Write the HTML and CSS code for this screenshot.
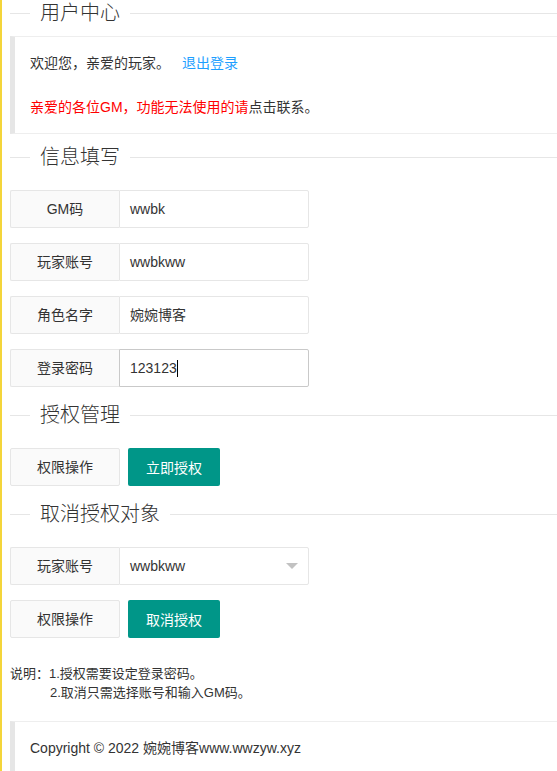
FILE: index.html
```html
<!DOCTYPE html>
<html lang="zh-CN">
<head>
<meta charset="utf-8">
<title>用户中心</title>
<link rel="stylesheet" href="styles.css">
</head>
<body>
<div class="page">
  <div class="legend legend-first"><span class="legend-text">用户中心</span></div>
  <div class="quote">
    欢迎您，亲爱的玩家。<a class="link" href="#">退出登录</a><br><br><span class="red">亲爱的各位GM，功能无法使用的请</span>点击联系。
  </div>

  <div class="legend"><span class="legend-text">信息填写</span></div>
  <div class="form-item">
    <div class="label">GM码</div>
    <div class="input">wwbk</div>
  </div>
  <div class="form-item">
    <div class="label">玩家账号</div>
    <div class="input">wwbkww</div>
  </div>
  <div class="form-item">
    <div class="label">角色名字</div>
    <div class="input">婉婉博客</div>
  </div>
  <div class="form-item">
    <div class="label">登录密码</div>
    <div class="input input-focus">123123<span class="caret"></span></div>
  </div>

  <div class="legend"><span class="legend-text">授权管理</span></div>
  <div class="form-item">
    <div class="label label-full">权限操作</div>
    <a class="btn" href="#">立即授权</a>
  </div>

  <div class="legend"><span class="legend-text">取消授权对象</span></div>
  <div class="form-item">
    <div class="label">玩家账号</div>
    <div class="input input-select">wwbkww<span class="arrow"></span></div>
  </div>
  <div class="form-item">
    <div class="label label-full">权限操作</div>
    <a class="btn" href="#">取消授权</a>
  </div>

  <div class="note">
    <div>说明：1.授权需要设定登录密码。</div>
    <div class="note-indent">2.取消只需选择账号和输入GM码。</div>
  </div>

  <div class="quote footer">Copyright © 2022 婉婉博客www.wwzyw.xyz</div>
</div>
</body>
</html>
```

FILE: styles.css
```css
html {
  border-left: 2px solid #f4d53a;
  min-height: 100%;
  box-sizing: border-box;
  background: #fff;
}
body {
  margin: 0;
  padding: 0 0 0 8px;
  font-family: "Liberation Sans", "Noto Sans CJK SC", sans-serif;
  font-size: 14px;
  color: #333;
  overflow: hidden;
}
.page {
  display: block;
}
.legend {
  display: flex;
  align-items: center;
  height: 26px;
  margin: 10px 0 20px;
  font-size: 20px;
  font-weight: 300;
  line-height: 26px;
  color: #333;
}
.legend::before {
  content: "";
  width: 20px;
  height: 1px;
  background: #e6e6e6;
}
.legend::after {
  content: "";
  flex: 1;
  height: 1px;
  background: #e6e6e6;
}
.legend-text {
  padding: 0 10px;
}
.legend-first {
  margin: 0 0 10px;
}
.quote {
  border: 1px solid #eee;
  border-left: 5px solid #e6e6e6;
  border-right: 0;
  padding: 15px;
  line-height: 22px;
  font-size: 14px;
  color: #333;
}
.link {
  color: #1e9fff;
  text-decoration: none;
  margin-left: 12px;
}
.red {
  color: #ff0000;
}
.form-item {
  display: flex;
  height: 38px;
  margin-bottom: 15px;
}
.label {
  box-sizing: border-box;
  width: 109px;
  height: 38px;
  border: 1px solid #e6e6e6;
  border-right: 0;
  border-radius: 2px 0 0 2px;
  background: #fafafa;
  display: flex;
  align-items: center;
  justify-content: center;
  line-height: 20px;
}
.label-full {
  width: 110px;
  border-right: 1px solid #e6e6e6;
  border-radius: 2px;
}
.input {
  box-sizing: border-box;
  width: 190px;
  height: 38px;
  border: 1px solid #e6e6e6;
  border-radius: 0 2px 2px 0;
  background: #fff;
  padding-left: 10px;
  display: flex;
  align-items: center;
  line-height: 20px;
}
.input-focus {
  border-color: #c9c9c9;
}
.caret {
  display: inline-block;
  width: 1px;
  height: 17px;
  background: #000;
}
.input-select {
  justify-content: space-between;
  padding-right: 10px;
}
.arrow {
  width: 0;
  height: 0;
  border-left: 6px solid transparent;
  border-right: 6px solid transparent;
  border-top: 6px solid #c2c2c2;
}
.btn {
  display: flex;
  align-items: center;
  height: 38px;
  padding: 0 18px;
  margin-left: 8px;
  background: #009688;
  color: #fff;
  border-radius: 2px;
  text-decoration: none;
  font-size: 14px;
}
.note {
  margin-top: 26px;
  font-size: 13px;
  line-height: 19px;
  color: #333;
}
.note-indent {
  padding-left: 40px;
}
.footer {
  margin-top: 19px;
}
```
